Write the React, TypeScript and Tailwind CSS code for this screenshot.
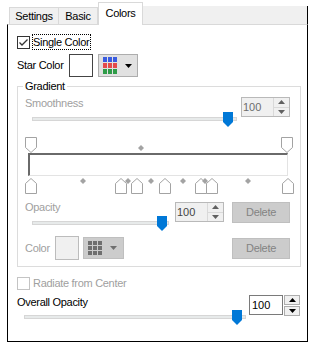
import React from "react";

function Thumb({ className }: { className: string }) {
  return (
    <svg width="10" height="15" viewBox="0 0 10 15" className={"absolute top-0 " + className}>
      <path d="M0 0H10V10L5 15L0 10Z" fill="#0078d7" />
    </svg>
  );
}

function Slider({ box, thumb }: { box: string; thumb: string }) {
  return (
    <div className={"relative h-[16px] " + box}>
      <div className="absolute left-0 right-0 top-[5px] h-[4px] bg-[#e7eaea] border border-[#d6d6d6]" />
      <Thumb className={thumb} />
    </div>
  );
}

function UpArrow({ color }: { color: string }) {
  return (
    <svg width="7" height="4" viewBox="0 0 7 4">
      <path d="M0 4L3.5 0L7 4Z" fill={color} />
    </svg>
  );
}
function DownArrow({ color }: { color: string }) {
  return (
    <svg width="7" height="4" viewBox="0 0 7 4">
      <path d="M0 0H7L3.5 4Z" fill={color} />
    </svg>
  );
}

function InnerSpin({ text }: { text: string }) {
  return (
    <div className="flex w-[49px] h-[20px] border border-[#b9b9b9] bg-[#f0f0f0]">
      <div className={"flex-1 pl-[1px] leading-[18px] tracking-normal " + text}>100</div>
      <div className="w-[16px] flex flex-col border-l border-[#d9d9d9]">
        <div className="flex-1 flex items-center justify-center border-b border-[#d9d9d9]">
          <UpArrow color="#606060" />
        </div>
        <div className="flex-1 flex items-center justify-center">
          <DownArrow color="#606060" />
        </div>
      </div>
    </div>
  );
}

function TopMarker({ className }: { className: string }) {
  return (
    <svg width="12" height="16" viewBox="0 0 12 16" className={"absolute top-0 " + className}>
      <path d="M0.5 0.5H11.5V10.5L6 15.5L0.5 10.5Z" fill="white" stroke="#a3a3a3" />
    </svg>
  );
}
function BottomMarker({ className }: { className: string }) {
  return (
    <svg width="12" height="16" viewBox="0 0 12 16" className={"absolute top-[41px] " + className}>
      <path d="M6 0.5L11.5 5.5V15.5H0.5V5.5Z" fill="white" stroke="#a3a3a3" />
    </svg>
  );
}
function Diamond({ className }: { className: string }) {
  return (
    <svg width="6" height="6" viewBox="0 0 6 6" className={"absolute " + className}>
      <path d="M3 0L6 3L3 6L0 3Z" fill="#a3a3a3" />
    </svg>
  );
}

function DeleteBtn() {
  return (
    <div className="w-[58px] h-[21px] bg-[#cccccc] border border-[#bfbfbf] flex items-center justify-center text-[#838383]">
      Delete
    </div>
  );
}

export default function App() {
  const swatchColors = ["#3a5ce0", "#3a5ce0", "#3a5ce0", "#e54b4b", "#e54b4b", "#e54b4b", "#2e9c48", "#2e9c48", "#2e9c48"];
  return (
    <div className="w-[312px] h-[343px] bg-white overflow-hidden font-['Liberation_Sans',Arial,sans-serif] text-[11px] tracking-[-0.3px] text-black leading-[13px]">
      {/* tab strip */}
      <div className="flex items-end h-[24px] pl-[9px]">
        <div className="h-[17px] w-[50px] border border-b-0 border-[#d9d9d9] bg-[#f0f0f0] flex items-center justify-center">
          Settings
        </div>
        <div className="h-[17px] w-[39px] border border-l-0 border-b-0 border-[#d9d9d9] bg-[#f0f0f0] flex items-center justify-center">
          Basic
        </div>
        <div className="relative z-10 -mb-px h-[23px] w-[45px] border border-b-0 border-[#d9d9d9] bg-white flex justify-center pt-[4px]">
          Colors
        </div>
        <div className="h-[18px] w-[165px] bg-[#f0f0f0] border-r border-black" />
      </div>

      {/* panel */}
      <div className="ml-[7px] w-[301px] h-[318px] border border-black border-t-[#d9d9d9] flex flex-col pl-[9px]">
        {/* Single Color */}
        <div className="mt-[9px] h-[16px] flex items-center">
          <div className="w-[13px] h-[13px] border border-[#333333] bg-white flex items-center justify-center">
            <svg width="11" height="11" viewBox="0 0 11 11">
              <path d="M1.5 5.5L4 8L9.5 2.5" fill="none" stroke="#333333" strokeWidth="1.3" />
            </svg>
          </div>
          <div className="ml-[2px] h-[16px] border border-dotted border-black pr-[1px] leading-[14px]">Single Color</div>
        </div>

        {/* Star Color */}
        <div className="mt-[4px] h-[23px] flex items-center">
          <div className="w-[52px]">Star Color</div>
          <div className="w-[24px] h-[23px] border border-[#444444] bg-white" />
          <div className="ml-[5px] w-[40px] h-[23px] border border-[#adadad] bg-[#e1e1e1] flex items-center pl-[4px]">
            <div className="grid grid-cols-3 gap-[1px] w-[14px]">
              {swatchColors.map((c, i) => (
                <span key={i} className="block w-[4px] h-[5px]" style={{ backgroundColor: c }} />
              ))}
            </div>
            <div className="ml-[8px]">
              <DownArrow color="#000000" />
            </div>
          </div>
        </div>

        {/* Gradient group */}
        <div className="mt-[9px] relative w-[284px] h-[181px] border border-[#dcdcdc] flex flex-col">
          <div className="absolute left-[5px] top-[-8px] bg-white px-[2px] leading-[14px]">Gradient</div>

          {/* Smoothness */}
          <div className="mt-[10px] flex pl-[7px]">
            <div className="w-[216px] flex flex-col">
              <div className="text-[#a0a0a0]">Smoothness</div>
              <Slider box="ml-[7px] mt-[2px] w-[205px]" thumb="left-[191px]" />
            </div>
            <InnerSpin text="text-[#6d6d6d]" />
          </div>

          {/* gradient editor */}
          <div className="mt-[9px] ml-[7px] relative w-[269px] h-[57px] pt-[16px] pl-[3px]">
            <div className="w-[260px] h-[23px] bg-white border-t-2 border-l-2 border-t-[#6a6a6a] border-l-[#6a6a6a] border-r border-b border-r-[#e3e3e3] border-b-[#e3e3e3]" />
            <TopMarker className="left-0" />
            <TopMarker className="left-[256px]" />
            <Diamond className="left-[113px] top-[8px]" />
            <BottomMarker className="left-0" />
            <BottomMarker className="left-[90px]" />
            <BottomMarker className="left-[106px]" />
            <BottomMarker className="left-[134px]" />
            <BottomMarker className="left-[170px]" />
            <BottomMarker className="left-[181px]" />
            <BottomMarker className="left-[257px]" />
            <Diamond className="left-[55px] top-[41px]" />
            <Diamond className="left-[100px] top-[41px]" />
            <Diamond className="left-[123px] top-[41px]" />
            <Diamond className="left-[155px] top-[41px]" />
            <Diamond className="left-[177px] top-[41px]" />
            <Diamond className="left-[220px] top-[41px]" />
          </div>

          {/* Opacity */}
          <div className="mt-[7px] flex pl-[7px] items-start">
            <div className="w-[150px] flex flex-col">
              <div className="text-[#a0a0a0]">Opacity</div>
              <Slider box="ml-[7px] mt-[2px] w-[137px]" thumb="left-[125px]" />
            </div>
            <div className="mt-[1px]">
              <InnerSpin text="text-[#444444]" />
            </div>
            <div className="ml-[8px] mt-[1px]">
              <DeleteBtn />
            </div>
          </div>

          {/* Color */}
          <div className="mt-[4px] flex pl-[7px] items-center h-[24px]">
            <div className="w-[30px] text-[#a0a0a0]">Color</div>
            <div className="w-[24px] h-[24px] border border-[#bcbcbc] bg-[#f0f0f0]" />
            <div className="ml-[4px] w-[41px] h-[22px] bg-[#cccccc] border border-[#bfbfbf] flex items-center pl-[4px]">
              <div className="grid grid-cols-3 gap-[1px] w-[14px]">
                {Array.from({ length: 9 }).map((_, i) => (
                  <span key={i} className="block w-[4px] h-[4px] bg-[#6f6f6f]" />
                ))}
              </div>
              <div className="ml-[8px]">
                <DownArrow color="#6f6f6f" />
              </div>
            </div>
            <div className="ml-[108px]">
              <DeleteBtn />
            </div>
          </div>
        </div>

        {/* Radiate */}
        <div className="mt-[10px] h-[13px] flex items-center">
          <div className="w-[13px] h-[13px] border border-[#c4c4c4] bg-white" />
          <div className="ml-[3px] text-[#a0a0a0]">Radiate from Center</div>
        </div>

        {/* Overall Opacity */}
        <div className="mt-[5px] flex">
          <div className="w-[232px] flex flex-col">
            <div className="mt-[1px]">Overall Opacity</div>
            <Slider box="ml-[7px] mt-[1px] w-[222px]" thumb="left-[208px]" />
          </div>
          <div className="w-[34px] h-[20px] border border-[#7a7a7a] bg-white pl-[2px] leading-[18px] tracking-normal">100</div>
          <div className="ml-[1px] w-[16px] flex flex-col gap-[1px]">
            <div className="h-[10px] border border-[#adadad] bg-[#f0f0f0] flex items-center justify-center">
              <UpArrow color="#000000" />
            </div>
            <div className="h-[10px] border border-[#adadad] bg-[#f0f0f0] flex items-center justify-center">
              <DownArrow color="#000000" />
            </div>
          </div>
        </div>
      </div>
    </div>
  );
}
